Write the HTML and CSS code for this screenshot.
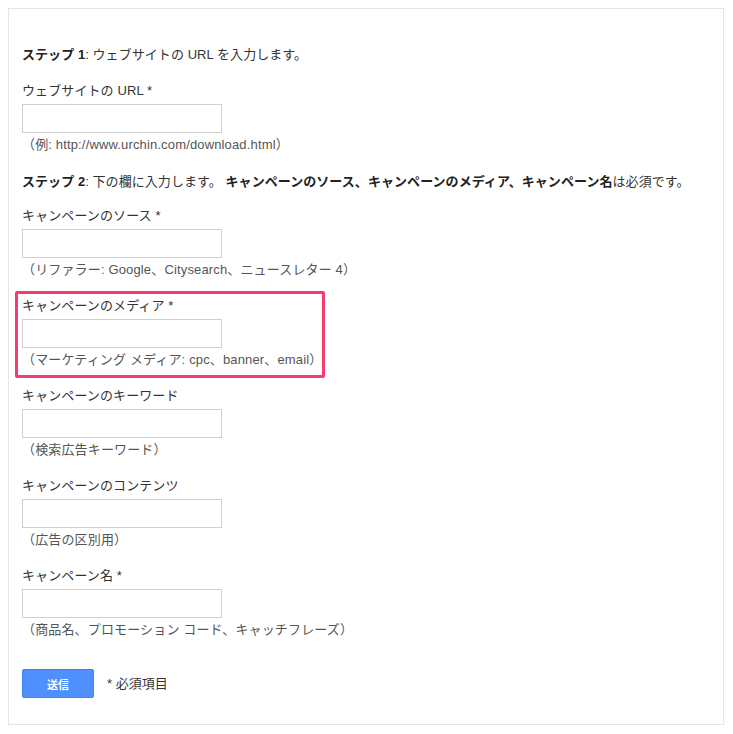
FILE: index.html
```html
<!DOCTYPE html>
<html lang="ja">
<head>
<meta charset="utf-8">
<title>URL 生成ツール</title>
<link rel="stylesheet" href="styles.css">
</head>
<body>
<div class="panel">
  <p class="step"><b>ステップ 1</b>: ウェブサイトの URL を入力します。</p>
  <div class="field">
    <label class="label">ウェブサイトの URL *</label>
    <input class="input" type="text">
    <div class="help">（例: http://www.urchin.com/download.html）</div>
  </div>
  <p class="step step2"><b>ステップ 2</b>: 下の欄に入力します。 <b>キャンペーンのソース、キャンペーンのメディア、キャンペーン名</b>は必須です。</p>
  <div class="field first">
    <label class="label">キャンペーンのソース *</label>
    <input class="input" type="text">
    <div class="help">（リファラー: Google、Citysearch、ニュースレター 4）</div>
  </div>
  <div class="field highlight">
    <label class="label">キャンペーンのメディア *</label>
    <input class="input" type="text">
    <div class="help">（マーケティング メディア: cpc、banner、email）</div>
  </div>
  <div class="field after-hl">
    <label class="label">キャンペーンのキーワード</label>
    <input class="input" type="text">
    <div class="help">（検索広告キーワード）</div>
  </div>
  <div class="field">
    <label class="label">キャンペーンのコンテンツ</label>
    <input class="input" type="text">
    <div class="help">（広告の区別用）</div>
  </div>
  <div class="field">
    <label class="label">キャンペーン名 *</label>
    <input class="input" type="text">
    <div class="help">（商品名、プロモーション コード、キャッチフレーズ）</div>
  </div>
  <div class="actions">
    <button class="submit" type="button">送信</button>
    <span class="required">* 必須項目</span>
  </div>
</div>
</body>
</html>
```
FILE: styles.css
```css
html, body {
  background: #fff;
}
body {
  margin: 8px;
  font-family: "Liberation Sans", Arial, "Noto Sans CJK JP", sans-serif;
  font-size: 13px;
  line-height: 18px;
  color: #333;
}
.panel {
  width: 716px;
  height: 717px;
  box-sizing: border-box;
  border: 1px solid #e5e5e5;
  padding: 37px 13px 26px 13px;
}
.step {
  margin: 0;
  color: #333;
  letter-spacing: 0.06px;
}
.step b {
  color: #222;
  font-weight: bold;
}
.step2 {
  margin-top: 19px;
}
.field {
  display: flex;
  flex-direction: column;
  align-items: flex-start;
  margin-top: 18px;
}
.field.first {
  margin-top: 16px;
}
.label {
  display: block;
  height: 18px;
  color: #333;
  letter-spacing: 0.1px;
}
.input {
  display: block;
  margin: 4px 0 0 0;
  width: 200px;
  height: 29px;
  box-sizing: border-box;
  border: 1px solid #d0d0d0;
  border-radius: 0;
  padding: 0 6px;
  font: inherit;
  background: #fff;
}
.help {
  margin-top: 3px;
  height: 18px;
  color: #555;
  letter-spacing: 0.15px;
}
.highlight {
  width: 310px;
  box-sizing: border-box;
  margin-top: 12px;
  margin-left: -7px;
  border: 3px solid #f73a70;
  border-radius: 2px;
  padding: 3px 4px 6px 4px;
}
.field.after-hl {
  margin-top: 9px;
}
.actions {
  display: flex;
  align-items: center;
  margin-top: 30px;
}
.submit {
  width: 72px;
  height: 29px;
  box-sizing: border-box;
  border: 1px solid #3f85f2;
  border-radius: 2px;
  background: #4d90fe;
  color: #fff;
  font-family: "Liberation Sans", Arial, "Noto Sans CJK JP", sans-serif;
  font-size: 11px;
  font-weight: bold;
  padding: 0;
}
.required {
  margin-left: 13px;
  color: #333;
}
```
